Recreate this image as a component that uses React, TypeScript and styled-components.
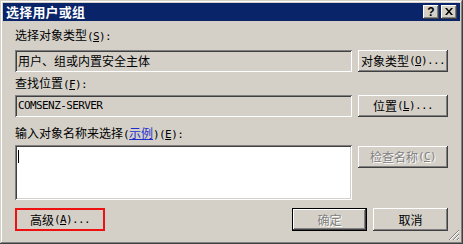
import React from "react";
import styled, { createGlobalStyle } from "styled-components";

const FACE = "#D4D0C8";

const Global = createGlobalStyle`
  html, body { margin: 0; padding: 0; background: ${FACE}; }
  body {
    font-family: "Noto Sans CJK SC", "Noto Sans", sans-serif;
    font-size: 12px;
    color: #000;
  }
  * { box-sizing: border-box; }
`;

const raised = `
  box-shadow: inset -1px -1px #404040, inset 1px 1px #ffffff,
    inset -2px -2px #808080, inset 2px 2px ${FACE};
`;

const sunken = `
  box-shadow: inset 1px 1px #808080, inset -1px -1px #ffffff,
    inset 2px 2px #404040, inset -2px -2px ${FACE};
`;

const Window = styled.div`
  position: relative;
  width: 463px;
  height: 244px;
  padding: 3px;
  background: ${FACE};
  box-shadow: inset -1px -1px #404040, inset 1px 1px ${FACE},
    inset -2px -2px #808080, inset 2px 2px #ffffff;
  display: flex;
  flex-direction: column;
`;

const TitleBar = styled.div`
  height: 18px;
  background: #0a246a;
  display: flex;
  align-items: center;
  padding: 0 3px 0 3px;
  color: #fff;
`;

const Title = styled.div`
  flex: 1;
  font-weight: 700;
  font-size: 13px;
  letter-spacing: 0.2px;
  line-height: 14px;
  white-space: nowrap;
`;

const CaptionButtons = styled.div`
  display: flex;
  gap: 2px;
`;

const CaptionButton = styled.div`
  width: 16px;
  height: 14px;
  background: ${FACE};
  ${raised}
  display: flex;
  align-items: center;
  justify-content: center;
  color: #000;
  font-family: "Liberation Sans", Arial, sans-serif;
  font-weight: 700;
  font-size: 12px;
  line-height: 12px;
  padding-bottom: 1px;
`;

const Body = styled.div`
  display: flex;
  flex-direction: column;
  padding: 7px 12px 0 12px;
`;

const Label = styled.div<{ $top: number }>`
  height: 14px;
  line-height: 14px;
  margin-top: ${(p) => p.$top}px;
  white-space: nowrap;
`;

const Half = styled.span`
  font-family: "DejaVu Sans Mono", "Liberation Mono", monospace;
  font-size: 11px;
  letter-spacing: -0.6px;
`;

const Key = styled.span`
  text-decoration: underline;
`;

const Link = styled.span`
  color: #1c2fcc;
  text-decoration: underline;
`;

const Row = styled.div<{ $top: number }>`
  display: flex;
  gap: 6px;
  align-items: flex-start;
  margin-top: ${(p) => p.$top}px;
`;

const Field = styled.div<{ $h: number; $white?: boolean; $mono?: boolean }>`
  width: 337px;
  height: ${(p) => p.$h}px;
  background: ${(p) => (p.$white ? "#ffffff" : FACE)};
  ${sunken}
  padding: ${(p) => (p.$white ? "5px 3px" : "0 3px")};
  display: flex;
  align-items: ${(p) => (p.$white ? "flex-start" : "center")};
  white-space: nowrap;
  line-height: 14px;
  ${(p) =>
    p.$mono
      ? `font-family: "DejaVu Sans Mono", "Liberation Mono", monospace;
         font-size: 11px; letter-spacing: -0.6px;`
      : ""}
`;

const Caret = styled.span`
  display: inline-block;
  width: 1px;
  height: 13px;
  background: #000;
`;

const Button = styled.div<{ $w: number; $h: number; $disabled?: boolean; $default?: boolean; $top?: number }>`
  width: ${(p) => p.$w}px;
  height: ${(p) => p.$h}px;
  margin-top: ${(p) => p.$top ?? 0}px;
  background: ${FACE};
  ${raised}
  ${(p) => (p.$default ? "border: 1px solid #000;" : "")}
  display: flex;
  align-items: center;
  justify-content: center;
  line-height: 14px;
  white-space: nowrap;
  color: ${(p) => (p.$disabled ? "#808080" : "#000")};
  text-shadow: ${(p) => (p.$disabled ? "1px 1px 0 #ffffff" : "none")};
  flex-shrink: 0;
`;

const Footer = styled.div`
  display: flex;
  justify-content: space-between;
  margin-top: 8px;
`;

const ButtonGroup = styled.div`
  display: flex;
  gap: 6px;
`;

const Marked = styled.div`
  position: relative;
  &::after {
    content: "";
    position: absolute;
    inset: 0;
    border: 2px solid #ee1111;
  }
`;

const Grip = styled.svg`
  position: absolute;
  right: 3px;
  bottom: 3px;
`;

export default function App() {
  return (
    <>
      <Global />
      <Window>
        <TitleBar>
          <Title>选择用户或组</Title>
          <CaptionButtons>
            <CaptionButton>?</CaptionButton>
            <CaptionButton>
              <svg width="8" height="7" viewBox="0 0 8 7">
                <path d="M0 0h2l2 2.5L6 0h2L5 3.5 8 7H6L4 4.5 2 7H0l3-3.5z" fill="#000" />
              </svg>
            </CaptionButton>
          </CaptionButtons>
        </TitleBar>
        <Body>
          <Label $top={0}>
            选择对象类型<Half>(<Key>S</Key>):</Half>
          </Label>
          <Row $top={8}>
            <Field $h={22}>用户、组或内置安全主体</Field>
            <Button $w={90} $h={22}>
              对象类型<Half>(<Key>O</Key>)...</Half>
            </Button>
          </Row>
          <Label $top={4}>
            查找位置<Half>(<Key>F</Key>):</Half>
          </Label>
          <Row $top={5}>
            <Field $h={22} $mono>
              COMSENZ-SERVER
            </Field>
            <Button $w={90} $h={22}>
              位置<Half>(<Key>L</Key>)...</Half>
            </Button>
          </Row>
          <Label $top={9}>
            输入对象名称来选择<Half>(</Half><Link>示例</Link><Half>)(<Key>E</Key>):</Half>
          </Label>
          <Row $top={5}>
            <Field $h={55} $white>
              <Caret />
            </Field>
            <Button $w={90} $h={22} $top={1} $disabled>
              检查名称<Half>(<Key>C</Key>)</Half>
            </Button>
          </Row>
          <Footer>
            <Marked>
              <Button $w={90} $h={23}>
                高级<Half>(<Key>A</Key>)...</Half>
              </Button>
            </Marked>
            <ButtonGroup>
              <Button $w={75} $h={23} $disabled $default>
                确定
              </Button>
              <Button $w={75} $h={23}>
                取消
              </Button>
            </ButtonGroup>
          </Footer>
        </Body>
        <Grip width="12" height="12" viewBox="0 0 12 12">
          <path d="M11 1L1 11M11 5L5 11M11 9L9 11" stroke="#808080" strokeWidth="1" />
          <path d="M11 2L2 11M11 6L6 11M11 10L10 11" stroke="#ffffff" strokeWidth="1" />
        </Grip>
      </Window>
    </>
  );
}
